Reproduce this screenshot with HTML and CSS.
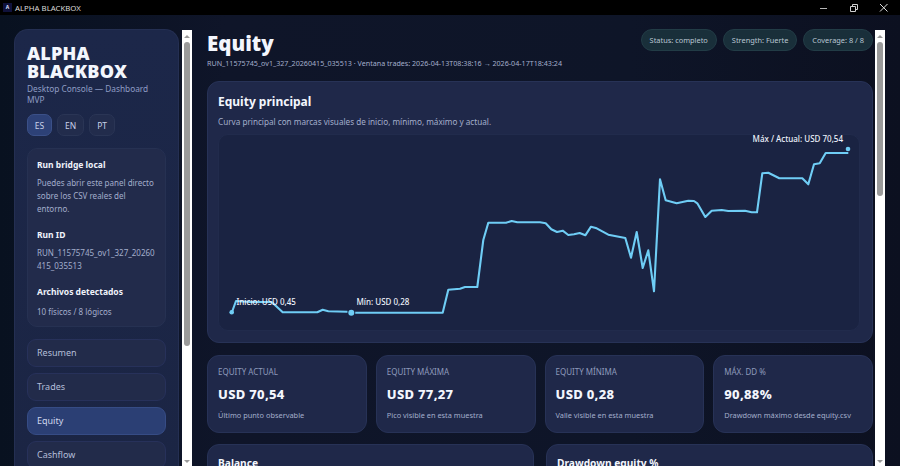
FILE: index.html
```html
<!DOCTYPE html>
<html lang="es">
<head>
    <meta charset="UTF-8">
    <title>ALPHA BLACKBOX</title>
    <meta name="viewport" content="width=device-width, initial-scale=1.0">
    <link rel="stylesheet" href="styles.css">
</head>
<body>
    <div class="titlebar">
        <div class="app-name">
            <span class="app-icon">A</span>
            <span>ALPHA BLACKBOX</span>
        </div>
        <div class="window-btns">
            <svg width="10" height="10" viewBox="0 0 10 10"><path d="M1 5.5h7" stroke="#b5b5b5" fill="none"/></svg>
            <svg width="10" height="10" viewBox="0 0 10 10"><path d="M1.5 3.5h5v5h-5zM3.5 3.5v-2h5v5h-2" stroke="#d0d0d0" fill="none"/></svg>
            <svg width="10" height="10" viewBox="0 0 10 10"><path d="M1 1l7.5 7.5M8.5 1L1 8.5" stroke="#e0e0e0" fill="none"/></svg>
        </div>
    </div>
    <div class="app">
        <aside class="sidebar">
            <h1>ALPHA BLACKBOX</h1>
            <div class="tagline">Desktop Console — Dashboard MVP</div>
            <div class="langs">
                <button class="lang active">ES</button>
                <button class="lang">EN</button>
                <button class="lang">PT</button>
            </div>
            <div class="info-box">
                <h4>Run bridge local</h4>
                <p>Puedes abrir este panel directo sobre los CSV reales del entorno.</p>
                <h4>Run ID</h4>
                <p class="run-id">RUN_11575745_ov1_327_20260415_035513</p>
                <h4>Archivos detectados</h4>
                <p class="last">10 físicos / 8 lógicos</p>
            </div>
            <nav class="nav">
                <a class="nav-item">Resumen</a>
                <a class="nav-item">Trades</a>
                <a class="nav-item active">Equity</a>
                <a class="nav-item">Cashflow</a>
            </nav>
        </aside>
        <div class="scrollbar side-scroll">
            <span class="arrow up"></span>
            <span class="thumb"></span>
            <span class="arrow down"></span>
        </div>
        <main class="main">
            <header class="page-head">
                <div>
                    <h2>Equity</h2>
                    <div class="run-line">RUN_11575745_ov1_327_20260415_035513 · Ventana trades: 2026-04-13T08:38:16 → 2026-04-17T18:43:24</div>
                </div>
                <div class="pills">
                    <span class="pill">Status: completo</span>
                    <span class="pill">Strength: Fuerte</span>
                    <span class="pill">Coverage: 8 / 8</span>
                </div>
            </header>
            <section class="card chart-card">
                <h3>Equity principal</h3>
                <p class="card-sub">Curva principal con marcas visuales de inicio, mínimo, máximo y actual.</p>
                <div class="chart">
                    <svg viewBox="219 135 640 195" width="640" height="195">
                        <polyline class="curve" points="232,312 236,301 250,302 271.7,302 282.7,312.3 317.3,312.3 322.7,309.7 328.3,311.3 346.7,311.7 351.3,312.7 442.7,312.7 448.3,289.7 460,288.7 465,287 477.3,287 483.3,240 488.3,222.7 506,222.7 511.7,221 517.3,222.3 540,222.3 545.7,223.3 551.3,229.3 557,232 562.7,230.7 568.3,235 574,234.3 579.7,233 585.3,235.3 591,226.7 596.7,228.3 608.3,234.7 625.3,238 631,257.7 636.7,232 642.7,268 648.3,250.3 654,291.3 660,179.3 665.7,200.3 676.7,203.3 688.3,200.7 694,201 697.3,203.3 705.3,217 711.7,210.7 721.7,210 728.3,211 745,210.7 751.7,212.3 757,212.3 762.3,173.3 768.3,172.7 779.3,178.3 802.3,178.3 808.3,184.3 814,164.3 819.7,163.3 825.7,153 848.3,153"/>
                        <circle class="dot" cx="231.7" cy="312.3" r="2.3"/>
                        <circle class="dot halo" cx="351.3" cy="312.7" r="2.3"/>
                        <circle class="dot" cx="848" cy="149" r="2.3"/>
                        <text class="mark" x="236.5" y="305">Inicio: USD 0,45</text>
                        <text class="mark" x="356.5" y="305">Mín: USD 0,28</text>
                        <text class="mark" x="843" y="142" text-anchor="end">Máx / Actual: USD 70,54</text>
                    </svg>
                </div>
            </section>
            <section class="stats">
                <div class="card stat">
                    <div class="stat-label">EQUITY ACTUAL</div>
                    <div class="stat-value">USD 70,54</div>
                    <div class="stat-note">Último punto observable</div>
                </div>
                <div class="card stat">
                    <div class="stat-label">EQUITY MÁXIMA</div>
                    <div class="stat-value">USD 77,27</div>
                    <div class="stat-note">Pico visible en esta muestra</div>
                </div>
                <div class="card stat">
                    <div class="stat-label">EQUITY MÍNIMA</div>
                    <div class="stat-value">USD 0,28</div>
                    <div class="stat-note">Valle visible en esta muestra</div>
                </div>
                <div class="card stat">
                    <div class="stat-label">MÁX. DD %</div>
                    <div class="stat-value">90,88%</div>
                    <div class="stat-note">Drawdown máximo desde equity.csv</div>
                </div>
            </section>
            <section class="two-col">
                <div class="card mini"><h3>Balance</h3></div>
                <div class="card mini"><h3>Drawdown equity %</h3></div>
            </section>
        </main>
        <div class="scrollbar main-scroll">
            <span class="arrow up"></span>
            <span class="thumb"></span>
            <span class="arrow down"></span>
        </div>
    </div>
</body>
</html>
```

FILE: styles.css
```css
* {
    box-sizing: border-box;
}
html, body {
    height: 100%;
}
body {
    margin: 0;
    overflow: hidden;
    font-family: 'Noto Sans', 'Open Sans', Arial, sans-serif;
    background: #0b1221;
    color: #eef2fb;
    display: flex;
    flex-direction: column;
}
.titlebar {
    height: 15px;
    flex: none;
    background: #000;
    display: flex;
    justify-content: space-between;
    align-items: center;
    font-size: 7.8px;
    color: #d8d8d8;
}
.app-name {
    display: flex;
    align-items: center;
    gap: 3px;
    padding-left: 3px;
}
.app-icon {
    width: 9px;
    height: 9px;
    background: #10123c;
    color: #dfe3ff;
    font-size: 5px;
    font-weight: 700;
    text-align: center;
    line-height: 9px;
}
.window-btns {
    display: flex;
    gap: 20px;
    padding-right: 11px;
    align-items: center;
}
.window-btns svg {
    display: block;
}
.app {
    flex: 1;
    min-height: 0;
    display: flex;
    overflow: hidden;
    background: linear-gradient(90deg, #081120 0%, #0f1529 25%, #0e1528 70%, #0c1020 100%);
}
.sidebar {
    width: 165px;
    margin: 14px 0 0 14px;
    flex: none;
    background: linear-gradient(180deg, #1c2749 0%, #1b2544 100%);
    border: 1px solid #242f52;
    border-bottom: none;
    border-radius: 14px 14px 0 0;
    padding: 14px 12px 0 12px;
    overflow: hidden;
}
h1 {
    margin: 0;
    font-size: 18px;
    line-height: 18px;
    font-weight: 900;
    letter-spacing: 0.2px;
    color: #f3f6fd;
}
.tagline {
    margin-top: 3px;
    font-size: 8.3px;
    line-height: 11px;
    color: #8f9dc4;
}
.langs {
    display: flex;
    gap: 5px;
    margin-top: 9px;
}
.lang {
    height: 22px;
    padding: 0 7px;
    font: inherit;
    font-size: 8.5px;
    color: #c8d1e8;
    background: #222c4c;
    border: 1px solid #2a3555;
    border-radius: 7px;
}
.lang.active {
    width: 25px;
    padding: 0;
    background: #2d4177;
    border-color: #3b5088;
}
.info-box {
    margin-top: 12px;
    padding: 10px 9px 8px 9px;
    background: #222b4b;
    border: 1px solid #263152;
    border-radius: 10px;
}
.info-box h4 {
    margin: 0;
    font-size: 8.5px;
    line-height: 12px;
    font-weight: 700;
    color: #f0f3fb;
}
.info-box p {
    margin: 5px 0 14px 0;
    font-size: 8px;
    line-height: 13px;
    color: #a3aecb;
    overflow-wrap: anywhere;
}
.info-box p.last {
    margin: 7px 0 0 0;
}
.nav {
    display: flex;
    flex-direction: column;
    gap: 6.5px;
    margin-top: 12px;
}
.nav-item {
    display: block;
    height: 27.5px;
    padding: 0 9px;
    font-size: 9px;
    line-height: 25.5px;
    color: #b4bed8;
    background: #222b4a;
    border: 1px solid #27315a;
    border-radius: 9px;
}
.nav-item.active {
    background: #2b3f74;
    border-color: #364c85;
    color: #cfd8ee;
}
.scrollbar {
    width: 10px;
    flex: none;
    margin-top: 15px;
    background: #fff;
    display: flex;
    flex-direction: column;
    align-items: center;
}
.side-scroll {
    margin-left: 3px;
}
.main-scroll {
    margin-left: 2px;
    margin-right: 15px;
}
.thumb {
    width: 6px;
    flex: none;
    background: #9a9a9a;
    border-radius: 3px;
}
.side-scroll .thumb {
    height: 304px;
    margin-top: 4px;
}
.main-scroll .thumb {
    height: 154px;
    margin-top: 4px;
}
.arrow {
    width: 0;
    height: 0;
    flex: none;
    border-left: 3px solid transparent;
    border-right: 3px solid transparent;
}
.arrow.up {
    margin-top: 5px;
    border-bottom: 3px solid #9a9a9a;
}
.arrow.down {
    margin-top: auto;
    margin-bottom: 3px;
    border-top: 3px solid #9a9a9a;
}
.main {
    flex: 1;
    min-width: 0;
    margin-left: 15px;
    padding-top: 14px;
    overflow: hidden;
}
.page-head {
    height: 52px;
    display: flex;
    justify-content: space-between;
    align-items: flex-start;
}
h2 {
    margin: 0;
    font-size: 20.5px;
    line-height: 28px;
    font-weight: 900;
    color: #f3f6fd;
}
.run-line {
    margin-top: 1px;
    font-size: 7.15px;
    line-height: 10px;
    white-space: nowrap;
    color: #a3aecb;
}
.pills {
    display: flex;
    gap: 6px;
}
.pill {
    height: 22px;
    padding: 0 8px;
    font-size: 7.4px;
    line-height: 20px;
    white-space: nowrap;
    color: #b9c6d2;
    background: #192f3a;
    border: 1px solid #223c46;
    border-radius: 11px;
}
.card {
    background: #1f2849;
    border: 1px solid #273256;
    border-radius: 12px;
}
h3 {
    margin: 0;
    font-size: 12px;
    line-height: 16px;
    font-weight: 700;
    color: #f3f6fd;
}
.chart-card {
    height: 262px;
    padding: 12px 12px 12px 10px;
}
.card-sub {
    margin: 6px 0 0 0;
    font-size: 8.17px;
    line-height: 12px;
    color: #a3aecb;
}
.chart {
    height: 197px;
    margin-top: 6px;
    background: #1a2342;
    border: 1px solid #212b4c;
    border-radius: 10px;
}
.chart svg {
    display: block;
    overflow: visible;
}
.curve {
    fill: none;
    stroke: #6fcdf5;
    stroke-width: 2.1;
    stroke-linejoin: round;
}
.dot {
    fill: #6fcdf5;
}
.halo {
    stroke: #1a2342;
    stroke-width: 2;
    paint-order: stroke;
    r: 3;
}
.mark {
    font-size: 8px;
    font-weight: 500;
    fill: #eef2fb;
}
.stats {
    display: grid;
    grid-template-columns: repeat(4, 1fr);
    gap: 9px;
    margin-top: 12px;
}
.stat {
    height: 78px;
    padding: 10px;
}
.stat-label {
    font-size: 8px;
    line-height: 12px;
    color: #8e9abb;
}
.stat-value {
    margin-top: 7px;
    font-size: 13px;
    line-height: 18px;
    font-weight: 800;
    letter-spacing: 0.3px;
    color: #f3f6fd;
}
.stat-note {
    margin-top: 7px;
    font-size: 7.4px;
    line-height: 11px;
    color: #a3aecb;
}
.two-col {
    display: grid;
    grid-template-columns: 1fr 1fr;
    gap: 12px;
    margin-top: 11px;
}
.mini {
    height: 80px;
    padding: 10px;
}
.mini h3 {
    font-size: 10.2px;
}
```
